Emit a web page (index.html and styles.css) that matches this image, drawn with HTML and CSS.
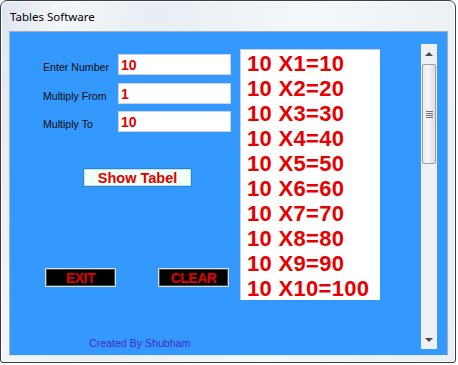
FILE: index.html
```html
<!DOCTYPE html>
<html lang="en">
<head>
    <meta charset="UTF-8">
    <title>Tables Software</title>
    <link rel="stylesheet" href="styles.css">
</head>
<body>
    <div class="window">
        <div class="title-bar">Tables Software</div>

        <div class="client">
            <div class="left-panel">
                <div class="form-row">
                    <label>Enter Number</label>
                    <input type="text" class="textbox" value="10">
                </div>
                <div class="form-row">
                    <label>Multiply From</label>
                    <input type="text" class="textbox" value="1">
                </div>
                <div class="form-row">
                    <label>Multiply To</label>
                    <input type="text" class="textbox" value="10">
                </div>

                <button class="show-btn">Show Tabel</button>

                <div class="action-row">
                    <button class="dark-btn exit">EXIT</button>
                    <button class="dark-btn clear">CLEAR</button>
                </div>

                <div class="credits">Created By Shubham</div>
            </div>

            <ul class="result-list">
                <li>10 X1=10</li>
                <li>10 X2=20</li>
                <li>10 X3=30</li>
                <li>10 X4=40</li>
                <li>10 X5=50</li>
                <li>10 X6=60</li>
                <li>10 X7=70</li>
                <li>10 X8=80</li>
                <li>10 X9=90</li>
                <li>10 X10=100</li>
            </ul>

            <div class="scrollbar">
                <div class="arrow up"></div>
                <div class="thumb">
                    <div class="grip"></div>
                </div>
                <div class="track"></div>
                <div class="arrow down"></div>
            </div>
        </div>
    </div>
</body>
</html>
```

FILE: styles.css
```css
body {
    margin: 0;
    background: #ffffff;
    font-family: 'Liberation Sans', Arial, sans-serif;
}
.window {
    width: 454px;
    height: 361px;
    border: 1px solid #3a3f45;
    border-radius: 7px 7px 3px 3px;
    background: linear-gradient(100deg, #dfe6ee 0%, #f3f6f9 12%, #e8eef4 30%, #f4f7fa 60%, #e9eef4 100%);
    box-shadow: inset 0 0 0 1px #f8fbfd;
}
.title-bar {
    height: 30px;
    padding-left: 9px;
    font-family: 'Noto Sans', 'Open Sans', sans-serif;
    font-size: 11.5px;
    line-height: 31px;
    color: #000;
}
.client {
    margin: 0 7px 0 8px;
    height: 323px;
    background: #3399ff;
    border: 1px solid #9fb0c2;
    border-bottom-color: #e6ecf2;
    display: flex;
    align-items: flex-start;
}
.left-panel {
    width: 197px;
    padding: 22px 0 0 33px;
    display: flex;
    flex-direction: column;
    align-items: flex-start;
}
.form-row {
    display: flex;
    align-items: center;
    margin-bottom: 8px;
}
.form-row:nth-child(2) {
    margin-bottom: 7px;
}
.form-row label {
    width: 75px;
    font-size: 10.6px;
    color: #0a0a0a;
    padding-top: 4px;
}
.textbox {
    box-sizing: border-box;
    width: 113px;
    height: 21px;
    margin: 0;
    padding: 0 0 0 2px;
    border: 1px solid #c9d3dc;
    background: #fff;
    font-family: 'Liberation Sans', Arial, sans-serif;
    font-size: 14px;
    font-weight: bold;
    color: #e00000;
    outline: none;
}
.show-btn {
    box-sizing: border-box;
    width: 109px;
    height: 19px;
    margin: 28px 0 0 40px;
    padding: 0;
    background: #f2fff4;
    border: 1px solid #2f86c6;
    box-shadow: inset 0 0 0 1px #bfe3f4;
    font-family: 'Liberation Sans', Arial, sans-serif;
    font-size: 14.5px;
    font-weight: bold;
    color: #e00000;
}
.action-row {
    display: flex;
    gap: 42px;
    margin: 81px 0 0 2px;
}
.dark-btn {
    box-sizing: border-box;
    width: 71px;
    height: 19px;
    padding: 0;
    background: #000;
    border: 1px solid #d9dde2;
    box-shadow: inset 0 0 0 1px #4a4a4a;
    font-family: 'Liberation Sans', Arial, sans-serif;
    font-size: 14px;
    font-weight: bold;
    letter-spacing: -0.5px;
    color: #e00000;
}
.credits {
    margin: 49px 0 0 46px;
    font-size: 10.6px;
    line-height: 14px;
    color: #4a26c4;
}
.result-list {
    list-style-type: none;
    box-sizing: border-box;
    width: 140px;
    height: 251px;
    margin: 17px 0 0 0;
    padding: 1px 0 0 6px;
    background: #fff;
    border-left: 1px solid #c3cfdb;
    border-top: 1px solid #c3cfdb;
}
.result-list li {
    height: 25px;
    font-size: 22px;
    line-height: 25px;
    font-weight: bold;
    letter-spacing: 0.3px;
    color: #e60000;
    white-space: nowrap;
}
.scrollbar {
    width: 16px;
    height: 305px;
    margin: 12px 0 0 41px;
    background: #eef0f2;
    display: flex;
    flex-direction: column;
}
.arrow {
    height: 20px;
    position: relative;
}
.arrow::after {
    content: '';
    position: absolute;
    left: 4px;
    width: 0;
    height: 0;
    border-left: 4px solid transparent;
    border-right: 4px solid transparent;
}
.arrow.up::after {
    top: 8px;
    border-bottom: 4px solid #4b4b4b;
}
.arrow.down::after {
    top: 9px;
    border-top: 4px solid #4b4b4b;
}
.thumb {
    box-sizing: border-box;
    height: 100px;
    margin: 0 1px;
    border: 1px solid #9a9ea3;
    border-radius: 2px;
    background: linear-gradient(90deg, #e9eaec 0%, #f6f6f7 40%, #dcdde0 100%);
    display: flex;
    align-items: center;
    justify-content: center;
}
.grip {
    width: 7px;
    height: 7px;
    background: repeating-linear-gradient(180deg, #6f7378 0, #6f7378 1px, transparent 1px, transparent 2px);
}
.track {
    flex: 1;
}
```
